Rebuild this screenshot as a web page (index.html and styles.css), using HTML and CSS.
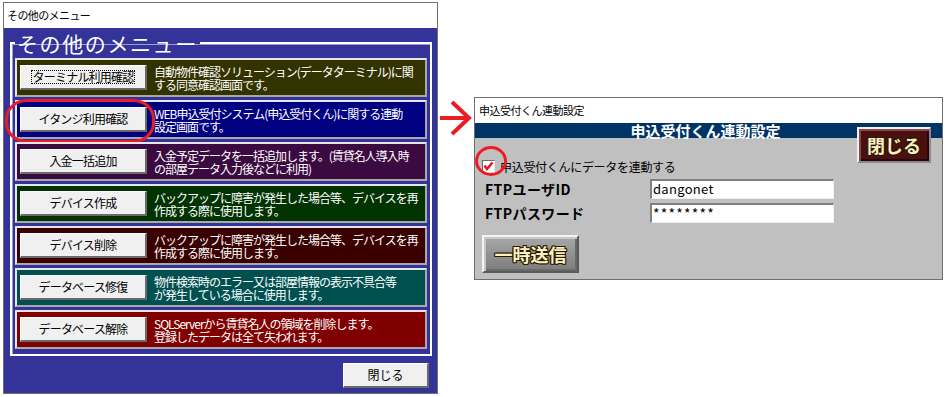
FILE: index.html
```html
<!DOCTYPE html>
<html lang="ja">
<head>
<meta charset="utf-8">
<title>その他のメニュー</title>
<link rel="stylesheet" href="styles.css">
</head>
<body>
<div class="stage">
  <section class="win win-menu">
    <div class="titlebar">その他のメニュー</div>
    <div class="menu-body">
      <fieldset class="group">
        <legend>その他のメニュー</legend>
        <div class="row r1">
          <button class="btn"><span class="focus">ターミナル利用確認</span></button>
          <p class="desc">自動物件確認ソリューション(データターミナル)に関<br>する同意確認画面です。</p>
        </div>
        <div class="row r2">
          <button class="btn">イタンジ利用確認</button>
          <p class="desc">WEB申込受付システム(申込受付くん)に関する連動<br>設定画面です。</p>
          <span class="mark-oval"></span>
        </div>
        <div class="row r3">
          <button class="btn">入金一括追加</button>
          <p class="desc">入金予定データを一括追加します。(賃貸名人導入時<br>の部屋データ入力後などに利用)</p>
        </div>
        <div class="row r4">
          <button class="btn">デバイス作成</button>
          <p class="desc">バックアップに障害が発生した場合等、デバイスを再<br>作成する際に使用します。</p>
        </div>
        <div class="row r5">
          <button class="btn">デバイス削除</button>
          <p class="desc">バックアップに障害が発生した場合等、デバイスを再<br>作成する際に使用します。</p>
        </div>
        <div class="row r6">
          <button class="btn">データベース修復</button>
          <p class="desc">物件検索時のエラー又は部屋情報の表示不具合等<br>が発生している場合に使用します。</p>
        </div>
        <div class="row r7">
          <button class="btn">データベース解除</button>
          <p class="desc">SQLServerから賃貸名人の領域を削除します。<br>登録したデータは全て失われます。</p>
        </div>
      </fieldset>
      <div class="footer">
        <button class="btn btn-close">閉じる</button>
      </div>
    </div>
  </section>

  <div class="arrow">
    <svg width="32" height="36" viewBox="0 0 32 36" aria-hidden="true">
      <path d="M0 18 H28 M12 2 L29 18 L12 34" fill="none" stroke="#ec1c24" stroke-width="4" stroke-linejoin="miter"/>
    </svg>
  </div>

  <section class="win win-link">
    <div class="titlebar small">申込受付くん連動設定</div>
    <div class="band">申込受付くん連動設定</div>
    <div class="link-body">
      <label class="check-row">
        <span class="checkbox">
          <svg width="11" height="11" viewBox="0 0 11 11" aria-hidden="true"><path d="M1.5 4.5 L4 8 L9.5 1.5" fill="none" stroke="#e8101a" stroke-width="2.4"/></svg>
        </span>
        <span>申込受付くんにデータを連動する</span>
      </label>
      <div class="form">
        <span class="flabel">FTPユーザID</span>
        <span class="field">dangonet</span>
        <span class="flabel">FTPパスワード</span>
        <span class="field pw">********</span>
      </div>
      <button class="fancy send">一時送信</button>
    </div>
    <button class="fancy close-fancy">閉じる</button>
    <span class="mark-circle"></span>
  </section>
</div>
</body>
</html>
```

FILE: styles.css
```css
* { box-sizing: border-box; }
html, body { margin: 0; padding: 0; background: #ffffff; }
body {
  font-family: "Noto Sans CJK JP", "Noto Sans", sans-serif;
  width: 945px;
  height: 397px;
  overflow: hidden;
}
.stage {
  display: flex;
  align-items: flex-start;
}

/* ---------- generic window ---------- */
.win {
  border: 1px solid #6f6f6f;
  background: #fff;
  position: relative;
}
.titlebar {
  height: 25px;
  line-height: 25px;
  padding-left: 3px;
  font-size: 11px;
  letter-spacing: -0.6px;
  color: #000;
  background: #fff;
  white-space: nowrap;
}

/* ---------- left menu window ---------- */
.win-menu {
  width: 435px;
  margin: 2px 0 0 3px;
}
.menu-body {
  background: #333399;
  padding: 4px 5px 5px 6px;
}
.group {
  margin: 0;
  min-width: 0;
  padding: 4px 3px 5px 3px;
  border: 2px solid #ffffff;
  box-shadow: inset 1px 1px 0 #9d9dc9;
  display: flex;
  flex-direction: column;
  gap: 3px;
}
.group legend {
  padding: 0 2px;
  font-size: 21px;
  line-height: 22px;
  letter-spacing: 1.6px;
  color: #ffffff;
  font-weight: 400;
}
.row {
  position: relative;
  height: 39px;
  display: flex;
  align-items: center;
  gap: 7px;
  padding: 0 3px;
  border: 2px solid;
  border-color: #e6e6e6 #a9a9a9 #a9a9a9 #e6e6e6;
}
.r1 { background: #333300; }
.r2 { background: #000080; }
.r3 { background: #3a0a40; }
.r4 { background: #003300; }
.r5 { background: #3a0000; }
.r6 { background: #005050; }
.r7 { background: #800000; }

.btn {
  flex: none;
  width: 127px;
  height: 25px;
  padding: 0;
  background: #f0f0f0;
  border-style: solid;
  border-width: 1px 2px 2px 1px;
  border-color: #ffffff #6a6a6a #6a6a6a #ffffff;
  font-family: inherit;
  font-size: 12px;
  letter-spacing: -0.8px;
  color: #000;
  line-height: 20px;
  white-space: nowrap;
}
.focus {
  display: inline-block;
  border: 1px dotted #000;
  padding: 0 1px;
  line-height: 12px;
}
.desc {
  margin: 0;
  color: #fff;
  font-size: 12px;
  line-height: 13px;
  letter-spacing: -1px;
  white-space: nowrap;
}
.mark-oval {
  position: absolute;
  left: -12px;
  top: -3px;
  width: 150px;
  height: 44px;
  border: 3px solid #ec1c24;
  border-radius: 22px / 20px;
  pointer-events: none;
}
.footer {
  display: flex;
  justify-content: flex-end;
  padding: 7px 3px 0 0;
}
.btn-close {
  width: 86px;
  letter-spacing: 0;
}

/* ---------- arrow ---------- */
.arrow {
  margin: 100px 0 0 2px;
  width: 34px;
  line-height: 0;
}

/* ---------- right link window ---------- */
.win-link {
  width: 469px;
  height: 183px;
  margin-top: 97px;
  background: #c0c0c0;
}
.titlebar.small {
  padding-left: 4px;
  letter-spacing: -0.5px;
}
.band {
  height: 15px;
  line-height: 15px;
  background: #003366;
  color: #fff;
  font-size: 15px;
  font-weight: 700;
  text-align: center;
  padding-right: 6px;
}
.link-body {
  padding: 22px 0 0 7px;
  font-size: 12px;
  color: #000;
}
.check-row {
  display: flex;
  align-items: center;
  gap: 5px;
  height: 13px;
  line-height: 13px;
  letter-spacing: -0.3px;
}
.checkbox {
  width: 13px;
  height: 13px;
  background: #fff;
  border-style: solid;
  border-width: 1px;
  border-color: #6a6a6a #e8e8e8 #e8e8e8 #6a6a6a;
  display: flex;
  align-items: center;
  justify-content: center;
}
.form {
  display: grid;
  grid-template-columns: 165px 184px;
  grid-auto-rows: 20px;
  row-gap: 4px;
  margin: 6px 0 0 3px;
  align-items: center;
}
.flabel {
  font-size: 14px;
  font-weight: 700;
  letter-spacing: 0.4px;
}
.field {
  height: 20px;
  background: #fff;
  border-style: solid;
  border-width: 2px 1px 1px 2px;
  border-color: #808080 #f0f0f0 #f0f0f0 #808080;
  font-size: 13px;
  line-height: 16px;
  padding-left: 1px;
  letter-spacing: 0.3px;
}
.field.pw {
  font-size: 14px;
  letter-spacing: 1.2px;
}
.fancy {
  font-family: inherit;
  font-weight: 700;
  font-size: 18px;
  color: #fbf0c4;
  text-shadow:
    1px 0 0 #2a1a00, -1px 0 0 #2a1a00, 0 1px 0 #2a1a00, 0 -1px 0 #2a1a00,
    1px 1px 0 #2a1a00, -1px -1px 0 #2a1a00, 1px -1px 0 #2a1a00, -1px 1px 0 #2a1a00;
  border-style: solid;
  border-width: 2px;
  padding: 0;
  letter-spacing: 0;
}
.send {
  display: block;
  margin-top: 12px;
  width: 97px;
  height: 38px;
  background: linear-gradient(#a8a8a8, #7c7c7c);
  border-color: #f4f4f4 #5a5a5a #5a5a5a #f4f4f4;
  box-shadow: inset 2px 2px 0 #c8c8c8, inset -2px -2px 0 #6a6a6a;
}
.close-fancy {
  position: absolute;
  top: 29px;
  right: 11px;
  width: 74px;
  height: 36px;
  background: #4a1010;
  border-color: #f2f2f2 #8a8a8a #8a8a8a #f2f2f2;
  box-shadow: inset 2px 2px 0 #8a4848, inset -2px -2px 0 #2a0606;
  font-size: 18px;
}
.mark-circle {
  position: absolute;
  left: 0;
  top: 48px;
  width: 32px;
  height: 30px;
  border: 3.5px solid #ec1c24;
  border-radius: 50%;
  pointer-events: none;
}
```
